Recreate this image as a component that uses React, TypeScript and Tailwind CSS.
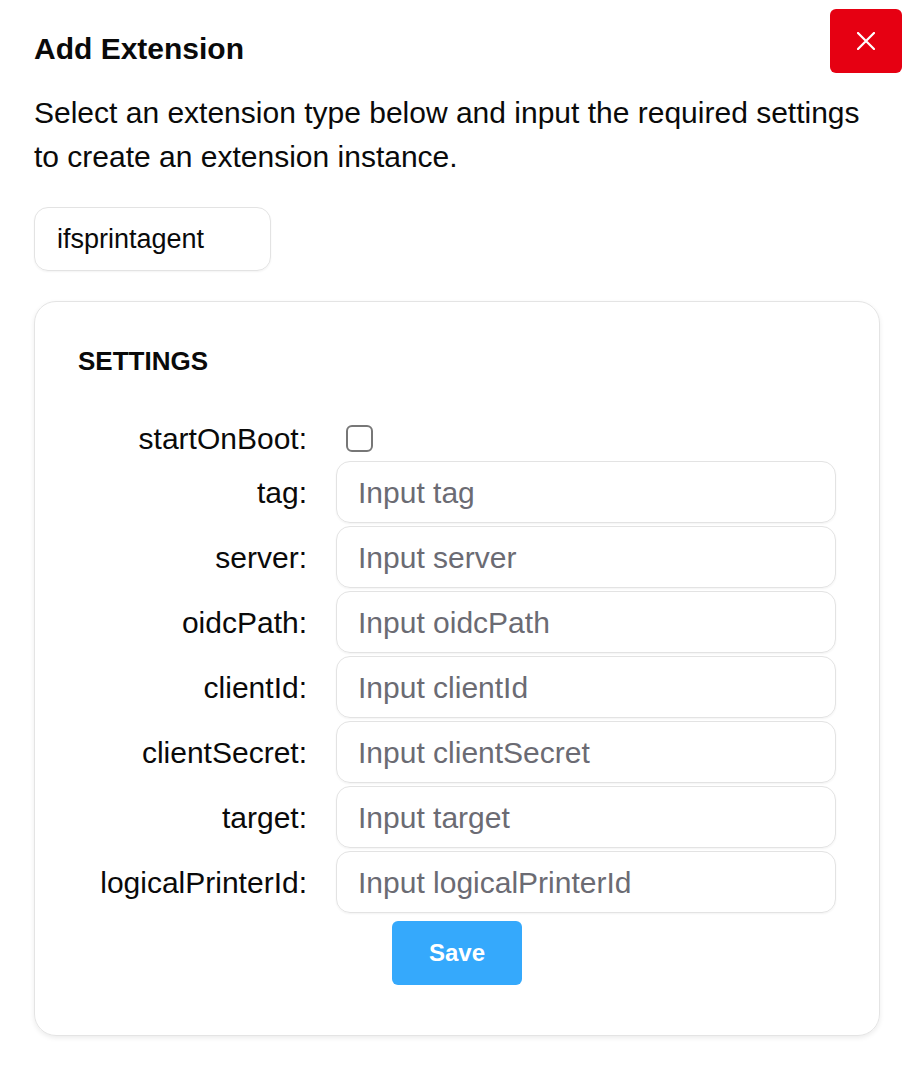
import React from "react"

const fields = [
  "tag",
  "server",
  "oidcPath",
  "clientId",
  "clientSecret",
  "target",
  "logicalPrinterId",
]

export default function App() {
  return (
    <div className="min-h-screen bg-white text-[#0a0a0a] font-['Liberation_Sans',Arial,sans-serif]">
      {/* Header */}
      <div className="flex items-start justify-between pl-[34px] pr-[10px] pt-[9px]">
        <h1 className="mt-[22px] text-[30px] leading-[36px] font-bold">Add Extension</h1>
        <button className="flex h-[64px] w-[72px] items-center justify-center rounded-[6px] bg-[#e60012]">
          <svg width="18" height="18" viewBox="0 0 18 18" fill="none">
            <path d="M1 1L17 17M17 1L1 17" stroke="white" strokeWidth="2.2" strokeLinecap="round" />
          </svg>
        </button>
      </div>

      <p className="mt-[18px] pl-[34px] pr-[32px] text-[30px] leading-[44px]">
        Select an extension type below and input the required settings to create an extension
        instance.
      </p>

      <div className="mt-[28px] ml-[34px] flex h-[64px] w-[237px] items-center rounded-[14px] border border-[#e3e3e3] pl-[22px] text-[27px] shadow-[0_1px_2px_rgba(0,0,0,0.05)]">
        ifsprintagent
      </div>

      {/* Settings card */}
      <div className="mt-[30px] ml-[34px] mr-[32px] rounded-[22px] border border-[#e4e4e4] px-[43px] pt-[43px] pb-[50px] shadow-[0_2px_5px_rgba(0,0,0,0.08)]">
        <h2 className="text-[26px] leading-[32px] font-bold">SETTINGS</h2>

        <div className="mt-[41px] grid grid-cols-[229px_1fr] gap-x-[29px] gap-y-[3px]">
          <label className="flex h-[40px] items-center justify-end text-[30px]">startOnBoot:</label>
          <div className="flex h-[40px] items-center">
            <span className="ml-[10px] block h-[27px] w-[27px] rounded-[6px] border-2 border-[#777]" />
          </div>

          {fields.map((f) => (
            <React.Fragment key={f}>
              <label className="flex h-[62px] items-center justify-end text-[30px]">{f}:</label>
              <div className="flex h-[62px] items-center rounded-[14px] border border-[#e3e3e3] pl-[21px] text-[30px] text-[#6b6b73] shadow-[0_1px_2px_rgba(0,0,0,0.05)]">
                Input {f}
              </div>
            </React.Fragment>
          ))}
        </div>

        <div className="mt-[8px] flex justify-center">
          <button className="h-[64px] w-[130px] rounded-[6px] bg-[#35a9fc] text-[24px] font-bold text-white">
            Save
          </button>
        </div>
      </div>
    </div>
  )
}
